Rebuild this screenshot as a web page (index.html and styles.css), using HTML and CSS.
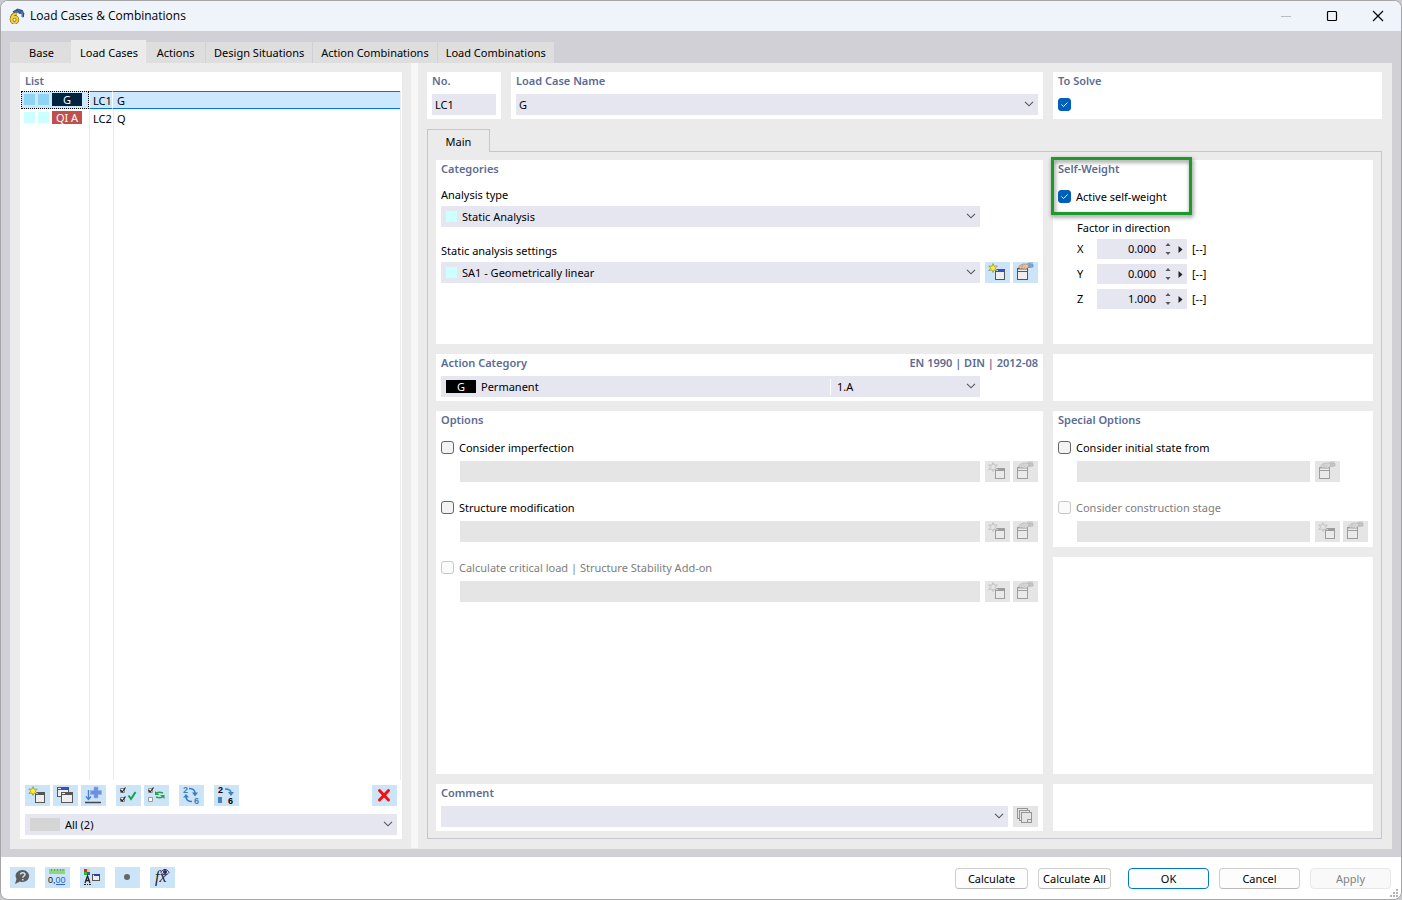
FILE: index.html
```html
<!DOCTYPE html>
<html lang="en">

<head>
    <meta charset="UTF-8">
    <meta name="viewport" content="width=device-width, initial-scale=1.0">
    <title>Load Cases &amp; Combinations</title>
    <link rel="stylesheet" href="styles.css">
</head>

<body>
    <!-- shared icons, every icon fills a 25x21 button -->
    <svg class="sprite" aria-hidden="true">
        <symbol id="i-new" viewBox="0 0 25 21">
            <rect x="10.5" y="7.5" width="9" height="10" fill="#eee" stroke="#555" />
            <path d="M13 8.5h6" stroke="#2f4fe0" />
            <path d="M10 9.500h10" stroke="#555" />
            <path d="M8 1.500l1 2.700 3.300-.2-2.100 2.200 2.100 2.300-3.300-.5-1 2.500-1-2.500-3.300.5 2.100-2.300L3.700 4l3.300.2z" fill="#ffee22" stroke="#8a8a50" stroke-width=".7" />
        </symbol>
        <symbol id="i-edit" viewBox="0 0 25 21">
            <rect x="4.500" y="6.500" width="10" height="11" fill="#eee" stroke="#555" />
            <path d="M5 7.500h9" stroke="#9fb0ee" />
            <path d="M4 9.500h11" stroke="#555" />
            <path d="M5.500 5l2-2 3-1 4 .2 1.500 1v2l-2 1-1.500 1.500-1-1-1.500.8-.8-1.300-1.700.8z" fill="#e6c4a8" stroke="#8c705e" stroke-width=".6" />
            <path d="M8 5l2.500-1.500M10.500 6l2-1.500" stroke="#8c705e" stroke-width=".5" />
            <path d="M14 2l2.500-1H20M16 5.500l4-.5V2.500l-4-.3z" fill="#7faad8" stroke="#5a7fa6" stroke-width=".6" />
        </symbol>
        <symbol id="i-copy" viewBox="0 0 25 21">
            <rect x="4.500" y="2.500" width="11" height="9" fill="#eee" stroke="#555" />
            <path d="M8 3.500h7" stroke="#2f4fe0" />
            <path d="M4 4.500h11" stroke="#555" />
            <rect x="8.500" y="7.500" width="11" height="10" fill="#eee" stroke="#555" />
            <path d="M12 8.500h7" stroke="#2f4fe0" />
            <path d="M8 9.500h12" stroke="#555" />
        </symbol>
        <symbol id="i-chevron" viewBox="0 0 10 6">
            <path d="M1 .8l4 4 4-4" fill="none" stroke="#555" stroke-width="1.100" />
        </symbol>
        <symbol id="i-spin" viewBox="0 0 20 14">
            <path d="M2.500 4h5L5 1zM2.500 10h5L5 13z" fill="#555" />
            <path d="M15.500 4l4 3.500-4 3.500z" fill="#222" />
        </symbol>
    </svg>

    <div class="window">
        <header class="titlebar">
            <svg class="app-icon" viewBox="0 0 16 16">
                <path d="M3.500 3.500L8.500.5l5 1.500 2 3.500-1 4-2-.5v-3l-4-1-3 1z" fill="#4f74aa" />
                <path d="M4 4l5-2.500 5 1.500M7 1.500l5 4M13 2l-3 4M14.500 5v4" fill="none" stroke="#2c4573" stroke-width=".8" />
                <path d="M7.500 5.500C4 6 2.500 9 2.500 11.800" fill="none" stroke="#6a5a1e" stroke-width="3.400" />
                <circle cx="5.500" cy="11.800" r="3" fill="none" stroke="#6a5a1e" stroke-width="3.400" />
                <path d="M7.500 5.500C4 6 2.500 9 2.500 11.800" fill="none" stroke="#f4cf31" stroke-width="2.200" />
                <circle cx="5.500" cy="11.800" r="3" fill="none" stroke="#f4cf31" stroke-width="2.200" />
            </svg>
            <h1>Load Cases &amp; Combinations</h1>
            <div class="win-controls">
                <button disabled aria-label="Minimize"><svg viewBox="0 0 12 12"><path d="M1 6.500h10" stroke="#b9bcc4" /></svg></button>
                <button aria-label="Maximize"><svg viewBox="0 0 12 12"><rect x="1.500" y="1.500" width="9" height="9" rx="1" fill="none" stroke="#000" stroke-width="1.200" /></svg></button>
                <button aria-label="Close"><svg viewBox="0 0 12 12"><path d="M1 1l10 10M11 1L1 11" stroke="#000" stroke-width="1.200" /></svg></button>
            </div>
        </header>

        <main class="workspace">
            <nav class="tabs">
                <button>Base</button>
                <button class="active">Load Cases</button>
                <button>Actions</button>
                <button>Design Situations</button>
                <button>Action Combinations</button>
                <button>Load Combinations</button>
            </nav>

            <div class="page">
                <section class="list-panel">
                    <h2>List</h2>
                    <div class="list">
                        <table>
                            <tr class="selected">
                                <td class="marks"><div><i></i><i></i><b class="badge navy">G</b></div></td>
                                <td class="no">LC1</td>
                                <td>G</td>
                            </tr>
                            <tr>
                                <td class="marks"><div><i></i><i></i><b class="badge red">QI A</b></div></td>
                                <td class="no">LC2</td>
                                <td>Q</td>
                            </tr>
                        </table>
                    </div>
                    <div class="toolbar">
                        <button class="icon-btn" aria-label="New"><svg><use href="#i-new" /></svg></button>
                        <button class="icon-btn" aria-label="Copy"><svg><use href="#i-copy" /></svg></button>
                        <button class="icon-btn" aria-label="Insert">
                            <svg viewBox="0 0 25 21">
                                <path d="M4 17.500h16" stroke="#444" stroke-width="1.500" />
                                <path d="M7.500 5v9M5 11.500l2.500 3 2.500-3" fill="none" stroke="#4a7fd0" stroke-width="1.400" />
                                <path d="M13 2h4v3.500h3.500v4H17V13h-4V9.500H9.500v-4H13z" fill="#6c8fe0" stroke="#94aeea" stroke-width=".6" />
                            </svg>
                        </button>
                        <button class="icon-btn group" aria-label="Select all">
                            <svg viewBox="0 0 25 21">
                                <path d="M4.500 3.500h4v4h-4zM4.500 12.500h4v4h-4z" fill="#fff" stroke="#888" />
                                <path d="M4.500 5l1.700 2L9.500 2.500M4.500 14l1.700 2 3.300-4.500" fill="none" stroke="#222" stroke-width="1.200" />
                                <path d="M12.500 10.500l2.500 3.500L19.500 7" fill="none" stroke="#16a34a" stroke-width="2" />
                            </svg>
                        </button>
                        <button class="icon-btn" aria-label="Invert selection">
                            <svg viewBox="0 0 25 21">
                                <path d="M4.500 3.500h4v4h-4zM4.500 12.500h4v4h-4z" fill="#fff" stroke="#999" />
                                <path d="M4.500 5l1.700 2L9.500 2.500" fill="none" stroke="#222" stroke-width="1.200" />
                                <path d="M12 9c1-2 4-2 7-1M19 11c-1 2-4 2-7 1" fill="none" stroke="#2aa04e" stroke-width="1.600" />
                                <path d="M11 6v4h4.500zM20.500 14v-4H16z" fill="#2aa04e" />
                            </svg>
                        </button>
                        <button class="icon-btn group" aria-label="Renumber">
                            <svg viewBox="0 0 25 21">
                                <text x="4" y="8" class="ico-num" fill="#3f7fbf">2</text>
                                <text x="15" y="19" class="ico-num" fill="#3f7fbf">6</text>
                                <path d="M10 3.500c4 0 6 2 6 5M13 16.500c-4 0-6-1-6-5" fill="none" stroke="#3f7fbf" stroke-width="1.600" />
                                <path d="M13 7.500h6L16 11.500zM4 12.500h6L7 9z" fill="#3f7fbf" />
                            </svg>
                        </button>
                        <button class="icon-btn group" aria-label="Renumber selected">
                            <svg viewBox="0 0 25 21">
                                <text x="4" y="8" class="ico-num" fill="#000">2</text>
                                <text x="14" y="19" class="ico-num" fill="#000">6</text>
                                <path d="M4 12h4v6H4z" fill="#4a7fb8" />
                                <path d="M11 4c4 0 6 1 6 4" fill="none" stroke="#3f7fbf" stroke-width="1.600" />
                                <path d="M14 7h6l-3 4z" fill="#3f7fbf" />
                            </svg>
                        </button>
                        <button class="icon-btn last" aria-label="Delete">
                            <svg viewBox="0 0 25 21"><path d="M7.500 5.500l9 9.500M16.500 5.500L7.500 15" stroke="#f80d0d" stroke-width="3" stroke-linecap="round" /></svg>
                        </button>
                    </div>
                    <div class="combo filter">
                        <i class="swatch gray"></i>
                        <select aria-label="Filter"><option>All (2)</option></select>
                        <svg class="chevron"><use href="#i-chevron" /></svg>
                    </div>
                </section>

                <div class="splitter"></div>

                <section class="details">
                    <div class="head-row">
                        <div class="card">
                            <h2><label for="no">No.</label></h2>
                            <input class="field" id="no" type="text" value="LC1">
                        </div>
                        <div class="card">
                            <h2><label for="name">Load Case Name</label></h2>
                            <div class="combo">
                                <select id="name"><option>G</option></select>
                                <svg class="chevron"><use href="#i-chevron" /></svg>
                            </div>
                        </div>
                        <div class="card">
                            <h2><label for="solve">To Solve</label></h2>
                            <div class="check"><input type="checkbox" id="solve" checked></div>
                        </div>
                    </div>

                    <div class="sub-tabs"><button>Main</button></div>

                    <div class="frame">
                        <div class="column">
                            <div class="card tall">
                                <h2>Categories</h2>
                                <label class="caption" for="type">Analysis type</label>
                                <div class="row">
                                    <div class="combo">
                                        <i class="swatch"></i>
                                        <select id="type"><option>Static Analysis</option></select>
                                        <svg class="chevron"><use href="#i-chevron" /></svg>
                                    </div>
                                </div>
                                <label class="caption next" for="settings">Static analysis settings</label>
                                <div class="row">
                                    <div class="combo">
                                        <i class="swatch"></i>
                                        <select id="settings"><option>SA1 - Geometrically linear</option></select>
                                        <svg class="chevron"><use href="#i-chevron" /></svg>
                                    </div>
                                    <button class="icon-btn" aria-label="New settings"><svg><use href="#i-new" /></svg></button>
                                    <button class="icon-btn" aria-label="Edit settings"><svg><use href="#i-edit" /></svg></button>
                                </div>
                            </div>

                            <div class="card">
                                <h2 class="split"><label for="category">Action Category</label><span>EN 1990 | DIN | 2012-08</span></h2>
                                <div class="row">
                                    <div class="combo">
                                        <b class="badge black">G</b>
                                        <select id="category"><option>Permanent</option></select>
                                        <span class="code">1.A</span>
                                        <svg class="chevron"><use href="#i-chevron" /></svg>
                                    </div>
                                </div>
                            </div>

                            <div class="card grow">
                                <h2>Options</h2>
                                <div class="option">
                                    <div class="check"><input type="checkbox" id="imp"><label for="imp">Consider imperfection</label></div>
                                    <div class="row indent">
                                        <input class="field" type="text" disabled aria-label="Imperfection">
                                        <button class="icon-btn" disabled aria-label="New"><svg><use href="#i-new" /></svg></button>
                                        <button class="icon-btn" disabled aria-label="Edit"><svg><use href="#i-edit" /></svg></button>
                                    </div>
                                </div>
                                <div class="option">
                                    <div class="check"><input type="checkbox" id="mod"><label for="mod">Structure modification</label></div>
                                    <div class="row indent">
                                        <input class="field" type="text" disabled aria-label="Modification">
                                        <button class="icon-btn" disabled aria-label="New"><svg><use href="#i-new" /></svg></button>
                                        <button class="icon-btn" disabled aria-label="Edit"><svg><use href="#i-edit" /></svg></button>
                                    </div>
                                </div>
                                <div class="option">
                                    <div class="check"><input type="checkbox" id="crit" disabled><label for="crit">Calculate critical load | Structure Stability Add-on</label></div>
                                    <div class="row indent">
                                        <input class="field" type="text" disabled aria-label="Critical load">
                                        <button class="icon-btn" disabled aria-label="New"><svg><use href="#i-new" /></svg></button>
                                        <button class="icon-btn" disabled aria-label="Edit"><svg><use href="#i-edit" /></svg></button>
                                    </div>
                                </div>
                            </div>

                            <div class="card">
                                <h2><label for="comment">Comment</label></h2>
                                <div class="row wide">
                                    <div class="combo">
                                        <select id="comment"><option></option></select>
                                        <svg class="chevron"><use href="#i-chevron" /></svg>
                                    </div>
                                    <button class="icon-btn" disabled aria-label="Comments">
                                        <svg viewBox="0 0 25 21" fill="#e5e5e5" stroke="#444">
                                            <rect x="4.500" y="2.500" width="10" height="10" />
                                            <rect x="6.500" y="4.500" width="10" height="10" />
                                            <rect x="8.500" y="6.500" width="10" height="10" />
                                            <path d="M14.500 16.500v-3h4" />
                                        </svg>
                                    </button>
                                </div>
                            </div>
                        </div>

                        <div class="column side">
                            <div class="card tall">
                                <div class="highlight"></div>
                                <h2>Self-Weight</h2>
                                <div class="option">
                                    <div class="check"><input type="checkbox" id="self" checked><label for="self">Active self-weight</label></div>
                                </div>
                                <div class="factors">
                                    <p>Factor in direction</p>
                                    <div class="factor"><label for="fx">X</label><div class="spin"><input id="fx" type="text" value="0.000"><svg><use href="#i-spin" /></svg></div><span>[--]</span></div>
                                    <div class="factor"><label for="fy">Y</label><div class="spin"><input id="fy" type="text" value="0.000"><svg><use href="#i-spin" /></svg></div><span>[--]</span></div>
                                    <div class="factor"><label for="fz">Z</label><div class="spin"><input id="fz" type="text" value="1.000"><svg><use href="#i-spin" /></svg></div><span>[--]</span></div>
                                </div>
                            </div>
                            <div class="card blank"></div>
                            <div class="card">
                                <h2>Special Options</h2>
                                <div class="option">
                                    <div class="check"><input type="checkbox" id="init"><label for="init">Consider initial state from</label></div>
                                    <div class="row indent">
                                        <input class="field" type="text" disabled aria-label="Initial state">
                                        <button class="icon-btn" disabled aria-label="Edit"><svg><use href="#i-edit" /></svg></button>
                                    </div>
                                </div>
                                <div class="option">
                                    <div class="check"><input type="checkbox" id="stage" disabled><label for="stage">Consider construction stage</label></div>
                                    <div class="row indent">
                                        <input class="field" type="text" disabled aria-label="Construction stage">
                                        <button class="icon-btn" disabled aria-label="New"><svg><use href="#i-new" /></svg></button>
                                        <button class="icon-btn" disabled aria-label="Edit"><svg><use href="#i-edit" /></svg></button>
                                    </div>
                                </div>
                            </div>
                            <div class="card grow"></div>
                            <div class="card blank"></div>
                        </div>
                    </div>
                </section>
            </div>
        </main>

        <footer class="footer">
            <div class="tools">
                <button class="icon-btn" aria-label="Help">
                    <svg viewBox="0 0 25 21">
                        <path d="M12.500 3a6.500 6 0 1 1-2.500 11.500L5 17l1.500-5A6.500 6 0 0 1 12.500 3z" fill="#5c5c5c" />
                        <path d="M10.500 7.500c0-2.500 4.500-2.500 4.500 0 0 1.500-2.200 1.500-2.200 3.300M12.800 12v1.600" fill="none" stroke="#cce4f7" stroke-width="1.500" />
                    </svg>
                </button>
                <button class="icon-btn" aria-label="Units">
                    <svg viewBox="0 0 25 21">
                        <path d="M4 2h16v5H4z" fill="#8fd67c" />
                        <path d="M6.500 2v2M9.500 2v2M12.500 2v2M15.500 2v2M18 2v2" stroke="#5c9d50" stroke-width=".8" />
                        <text x="3" y="16" class="ico-units" fill="#111">0,<tspan fill="#2a66d8">00</tspan></text>
                        <path d="M11 17.500h9" stroke="#2a66d8" />
                    </svg>
                </button>
                <button class="icon-btn" aria-label="Display">
                    <svg viewBox="0 0 25 21">
                        <path d="M4 2h3v3H4z" fill="#f02020" />
                        <path d="M7 2h3v3H7z" fill="#ffd820" />
                        <path d="M4 5h3v3H4z" fill="#20c030" />
                        <path d="M7 5h3v3H7z" fill="#3050f0" />
                        <path d="M5 16l2.500-7 2.500 7M6 13.500h3" fill="none" stroke="#222" stroke-width="1.300" />
                        <path d="M4 17.500h2M7 17.500h1M9 17.500h2" stroke="#222" />
                        <rect x="12.500" y="7.500" width="7" height="6" fill="#eee" stroke="#555" />
                        <path d="M14 8h6" stroke="#2f3fb0" stroke-width="2" />
                    </svg>
                </button>
                <button class="icon-btn" aria-label="Marker">
                    <svg viewBox="0 0 25 21"><circle cx="12" cy="10" r="3" fill="#666" /></svg>
                </button>
                <button class="icon-btn" aria-label="Formula">
                    <svg viewBox="0 0 25 21">
                        <text x="5" y="15" class="ico-fx" fill="#222">fx</text>
                        <path d="M11 5.500c2-4 6-4 8 0-2 3-6 3-8 0z" fill="#dfe6f4" stroke="#29295c" />
                        <circle cx="15" cy="5" r="2" fill="#29295c" />
                    </svg>
                </button>
            </div>
            <div class="actions">
                <button>Calculate</button>
                <button>Calculate All</button>
                <button class="wide primary">OK</button>
                <button class="wide">Cancel</button>
                <button class="wide" disabled>Apply</button>
            </div>
            <svg class="grip" viewBox="0 0 8 8"><path d="M6 0h2v2H6zM3 3h2v2H3zM6 3h2v2H6zM0 6h2v2H0zM3 6h2v2H3zM6 6h2v2H6z" fill="#b5b5b5" /></svg>
        </footer>
    </div>
</body>

</html>
```
FILE: styles.css
```css
* {
    box-sizing: border-box;
}

body {
    margin: 0;
    background: #c9c9cb;
    font: 11px/16px "Noto Sans", "Open Sans", sans-serif;
    color: #000;
}

h1, h2, p {
    margin: 0;
}

button, input, select {
    font: inherit;
    color: inherit;
    margin: 0;
    padding: 0;
    border: none;
    border-radius: 0;
    background: transparent;
}

svg {
    display: block;
}

.sprite {
    position: absolute;
    width: 0;
    height: 0;
}

.ico-num {
    font: bold 9px "Liberation Sans", sans-serif;
}

.ico-units {
    font: 9px "Liberation Sans", sans-serif;
}

.ico-fx {
    font: italic 16px "Liberation Serif", serif;
}

.window {
    display: flex;
    flex-direction: column;
    min-height: 100vh;
    border: 1px solid #a5a5a8;
    border-radius: 8px;
    background: #fff;
    overflow: hidden;
}

/* title bar */
.titlebar {
    display: flex;
    align-items: center;
    height: 30px;
    padding-left: 8px;
    background: #eff3fa;
}

.app-icon {
    width: 16px;
    height: 16px;
    margin-right: 5px;
}

h1 {
    font-family: "Open Sans", sans-serif;
    font-size: 12px;
    font-weight: normal;
}

.win-controls {
    display: flex;
    margin-left: auto;
}

.win-controls button {
    width: 46px;
    height: 30px;
}

.win-controls svg {
    width: 12px;
    height: 12px;
    margin: auto;
}

/* tabs */
.workspace {
    display: flex;
    flex-direction: column;
    flex: 1;
    padding: 9px 9px 8px;
    background: #d1d0d6;
}

.tabs {
    display: flex;
    align-items: flex-end;
}

.tabs button {
    min-width: 60px;
    height: 21px;
    padding: 0 8px;
    background: #dedede;
    border-right: 1px solid #d1d0d6;
}

.tabs button:first-child {
    min-width: 61px;
    padding-left: 10px;
    border: none;
}

.tabs button:last-child {
    border: none;
}

.tabs .active {
    height: 23px;
    padding: 2px 8px 0 9px;
    border: none;
    background: #ebebeb;
}

.page {
    display: flex;
    flex: 1;
    background: #ebebeb;
}

h2 {
    font-size: 11px;
    font-weight: 600;
    line-height: 18px;
    color: #5c6b94;
    margin-bottom: 4px;
}

/* list of load cases */
.list-panel {
    display: flex;
    flex-direction: column;
    width: 382px;
    margin: 9px 9px 10px 10px;
    padding-bottom: 4px;
    background: #fff;
}

.list-panel h2 {
    margin: 0 5px 1px;
}

.list {
    flex: 1;
    margin: 0 1px;
    background:
        linear-gradient(#ebebeb, #ebebeb) 68px 0 / 1px 100% no-repeat,
        linear-gradient(#ebebeb, #ebebeb) 92px 0 / 1px 100% no-repeat,
        linear-gradient(#ebebeb, #ebebeb) 100% 0 / 1px 100% no-repeat;
}

table {
    width: calc(100% - 1px);
    border-collapse: separate;
    border-spacing: 0;
    table-layout: fixed;
}

td {
    height: 18px;
    padding: 2px 0 0 4px;
    line-height: 16px;
}

.marks {
    width: 68px;
    padding: 0;
}

.marks div {
    display: flex;
    align-items: center;
    gap: 3px;
    height: 18px;
    padding: 0 0 1px 3px;
}

.marks i {
    width: 11px;
    height: 11px;
    background: #ccffff;
}

.no {
    width: 24px;
}

.selected td {
    padding-top: 1px;
    line-height: 15px;
    background: #cce8ff;
    border: solid #0078d7;
    border-width: 1px 0;
}

.selected .marks {
    padding: 0;
    border: 1px dotted #000;
}

.selected .marks div {
    height: 16px;
    padding: 0 0 1px 2px;
}

.selected .marks i {
    background: #8fd4f5;
}

.selected .no {
    padding-left: 3px;
    border-left: 1px solid #fff;
    border-right: 1px solid #fff;
}

.badge {
    width: 30px;
    height: 13px;
    font-weight: normal;
    line-height: 13px;
    text-align: center;
    color: #fff;
}

.navy {
    background: #00233f;
}

.red {
    background: #c0504d;
}

.black {
    background: #000;
    margin: 0 5px 0 2px;
}

.toolbar {
    display: flex;
    gap: 3px;
    padding: 5px 5px 8px;
}

.icon-btn {
    flex: none;
    width: 25px;
    height: 21px;
    background: #cce4f7;
}

.icon-btn svg {
    width: 25px;
    height: 21px;
}

.icon-btn:disabled {
    background: #e5e5e5;
}

.icon-btn:disabled svg {
    filter: grayscale(1) opacity(.5);
}

.group {
    margin-left: 7px;
}

.last {
    margin-left: auto;
}

.filter {
    margin: 0 5px;
}

.splitter {
    width: 7px;
    margin-bottom: 1px;
    background: #f7f7f7;
}

/* form controls */
.combo {
    position: relative;
    display: flex;
    align-items: center;
    flex: 1;
    height: 21px;
    padding-left: 3px;
    background: #e6e6f1;
}

.list-panel .combo {
    flex: none;
}

.combo select {
    flex: 1;
    min-width: 0;
    width: 100%;
    height: 21px;
    padding-right: 20px;
    appearance: none;
}

.chevron {
    position: absolute;
    right: 4px;
    top: 7px;
    width: 10px;
    height: 6px;
    pointer-events: none;
}

.swatch {
    flex: none;
    width: 11px;
    height: 11px;
    margin: 0 5px 0 2px;
    background: #ccffff;
}

.gray {
    width: 30px;
    height: 13px;
    background: #d5d5d5;
}

.black {
    flex: none;
}

.code {
    flex: none;
    width: 150px;
    padding-left: 6px;
    border-left: 1px solid #fff;
}

.field {
    width: 100%;
    height: 21px;
    padding: 0 3px;
    background: #e6e6f1;
}

.field:disabled {
    background: #e5e5e5;
}

.row {
    display: grid;
    grid-template-columns: minmax(0, 1fr) 25px 25px;
    column-gap: 3px;
}

.row .combo {
    margin-right: 2px;
}

.row .field {
    width: calc(100% - 2px);
}

.row.wide {
    grid-template-columns: minmax(0, 1fr) 25px;
}

.indent {
    margin-left: 19px;
}

.check {
    display: flex;
    align-items: center;
    gap: 5px;
    height: 21px;
}

.check input {
    appearance: none;
    width: 13px;
    height: 13px;
    border: 1px solid #666;
    border-radius: 3px;
    background: #f3f3f3;
}

.check input:checked {
    border-color: #005fb8;
    background: #005fb8 url("data:image/svg+xml,%3Csvg xmlns='http://www.w3.org/2000/svg' viewBox='0 0 11 11'%3E%3Cpath d='M2.500 5.500l2 2 4-4' fill='none' stroke='white'/%3E%3C/svg%3E");
}

.check input:disabled {
    border-color: #c8c8c8;
    background: #fafafa;
}

.check input:disabled + label {
    color: #7d7d7d;
}

/* right side */
.details {
    display: flex;
    flex-direction: column;
    flex: 1;
    min-width: 0;
    padding: 9px 10px 10px 9px;
}

.head-row {
    display: grid;
    grid-template-columns: 74px minmax(0, 1fr) 329px;
    gap: 10px;
    margin-bottom: 10px;
}

.card {
    position: relative;
    padding: 0 5px 4px;
    background: #fff;
}

.sub-tabs button {
    display: block;
    width: 63px;
    height: 23px;
    margin-bottom: -1px;
    position: relative;
    border: 1px solid #c5c4d0;
    border-bottom: none;
    background: #ebebeb;
    padding-top: 2px;
}

.frame {
    display: flex;
    gap: 10px;
    flex: 1;
    padding: 8px 8px 7px;
    border: 1px solid #c5c4d0;
}

.column {
    display: flex;
    flex-direction: column;
    gap: 10px;
    flex: 1;
    min-width: 0;
}

.side {
    flex: 0 0 320px;
}

.tall {
    min-height: 184px;
}

.blank {
    height: 47px;
}

.grow {
    flex: 1;
}

.split {
    display: flex;
    justify-content: space-between;
}

.caption {
    display: block;
    margin: 9px 0 3px;
}

.next {
    margin-top: 16px;
}

.option {
    margin-bottom: 15px;
}

h2 + .option {
    margin-top: 8px;
}

.option .check {
    margin-bottom: 3px;
}

.side .option:last-child {
    margin-bottom: 1px;
}

.factors {
    margin: -2px 0 0 19px;
}

.factors p {
    margin-bottom: 3px;
}

.factor {
    display: flex;
    align-items: center;
    margin-bottom: 5px;
}

.factor label {
    width: 20px;
}

.spin {
    display: flex;
    align-items: center;
    width: 90px;
    height: 20px;
    margin-right: 5px;
    background: #e6e6f1;
}

.spin input {
    flex: 1;
    min-width: 0;
    text-align: right;
}

.spin svg {
    width: 20px;
    height: 14px;
    margin: 0 4px 0 7px;
}

.highlight {
    position: absolute;
    left: -2px;
    top: -3px;
    width: 141px;
    height: 58px;
    border: 3px solid #1c9b2b;
    filter: drop-shadow(1px 2px 2px rgba(0, 0, 0, .5));
    pointer-events: none;
}

/* footer */
.footer {
    position: relative;
    display: flex;
    justify-content: space-between;
    padding: 10px 10px 10px 9px;
}

.tools, .actions {
    display: flex;
    gap: 10px;
}

.actions {
    padding-top: 1px;
}

.actions button {
    width: 73px;
    height: 21px;
    border: 1px solid #d0d0d0;
    border-bottom-color: #bababa;
    border-radius: 4px;
    background: #fdfdfd;
    white-space: nowrap;
}

.actions .wide {
    width: 81px;
}

.actions .primary {
    margin-left: 7px;
    border-color: #0078d4;
}

.actions button:disabled {
    border-color: #e8e8e8;
    background: #f9f9f9;
    color: #838383;
}

.grip {
    position: absolute;
    right: 3px;
    bottom: 2px;
    width: 8px;
    height: 8px;
}
```
